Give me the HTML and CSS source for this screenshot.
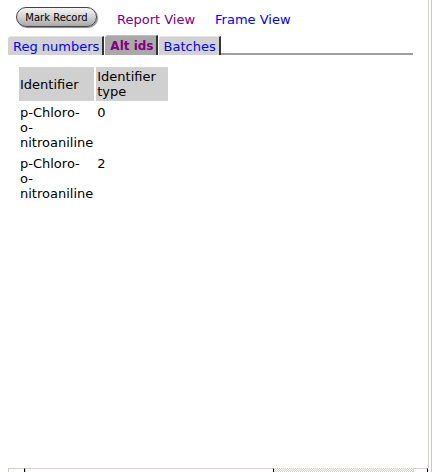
FILE: index.html
```html
<!DOCTYPE html>
<html>
<head>
<meta charset="utf-8">
<link rel="stylesheet" href="styles.css">
</head>
<body>
<div class="frame">
  <div class="content">
    <div class="topbar">
      <button class="mark">Mark Record</button>
      <a class="link visited" href="#">Report View</a>
      <a class="link" href="#">Frame View</a>
    </div>
    <div class="tabs">
      <a class="tab" href="#">Reg numbers</a>
      <a class="tab active" href="#">Alt ids</a>
      <a class="tab" href="#">Batches</a>
      <span class="tabline"></span>
    </div>
    <table class="ids">
      <tr><th class="c1">Identifier</th><th class="c2">Identifier type</th></tr>
      <tr><td><span class="seg">p-Chloro-</span><span class="seg">o-</span><span class="seg">nitroaniline</span></td><td>0</td></tr>
      <tr><td><span class="seg">p-Chloro-</span><span class="seg">o-</span><span class="seg">nitroaniline</span></td><td>2</td></tr>
    </table>
  </div>
  <div class="hscroll">
    <span class="sb-btn"></span>
    <span class="sb-thumb"></span>
    <span class="sb-track"></span>
    <span class="sb-btn right"></span>
  </div>
</div>
</body>
</html>
```

FILE: styles.css
```css
html, body {
  margin: 0;
  padding: 0;
  background: #fff;
}
body {
  font-family: "DejaVu Sans", Verdana, sans-serif;
  font-size: 13px;
  color: #000;
}
.frame {
  height: 472px;
  width: 432px;
  box-sizing: border-box;
  display: flex;
  flex-direction: column;
  border-right: 1px solid #c8c8c8;
  padding-right: 1px;
}
.content {
  flex: 1;
  border-right: 1px solid #d4d0c8;
  margin-right: 1px;
}
.topbar {
  display: flex;
  align-items: center;
  gap: 20px;
  padding: 7px 0 0 16px;
  height: 20px;
}
.mark {
  height: 20px;
  width: 81px;
  padding: 0;
  font-family: "DejaVu Sans", Verdana, sans-serif;
  font-size: 10px;
  color: #000;
  border: 1px solid #444;
  border-radius: 10px;
  background: linear-gradient(#f4f4f4 0%, #d6d6d6 45%, #a8a8a8 100%);
  box-shadow: 1px 1px 1px #888;
}
.link {
  color: #0000ff;
  text-decoration: none;
  font-size: 13px;
  position: relative;
  top: 2px;
}
.link.visited {
  color: #800080;
}
.tabs {
  display: flex;
  align-items: flex-end;
  margin: 7px 0 0 8px;
  height: 21px;
}
.tab {
  display: block;
  box-sizing: border-box;
  height: 19px;
  line-height: 19px;
  padding: 0 3px 0 5px;
  background: #d2d2d2;
  border-top: 1px solid #e4e4e4;
  border-right: 2px solid #333;
  border-top-left-radius: 3px;
  color: #0000ff;
  text-decoration: none;
  font-size: 13px;
  margin-right: 1px;
}
.tab.active {
  height: 20px;
  background: #a9a9a9;
  color: #800080;
  font-weight: bold;
  font-size: 12px;
  border-top-color: #c0c0c0;
  padding: 0 2px 0 5px;
  line-height: 20px;
}
.tabline {
  width: 192px;
  height: 1px;
  border-bottom: 2px solid #a0a0a0;
  margin-left: -1px;
}
.ids {
  margin: 10px 0 0 17px;
  border-collapse: separate;
  border-spacing: 2px;
  font-size: 13px;
}
.ids th {
  background: #d0d0d0;
  font-weight: normal;
  text-align: left;
  vertical-align: middle;
  padding: 2px 1px;
  line-height: 15px;
}
.ids th.c1 { width: 72px; }
.ids th.c2 { width: 70px; }
.ids td {
  vertical-align: top;
  padding: 2px 1px;
  line-height: 15px;
}
.seg {
  display: block;
}
.hscroll {
  display: flex;
  height: 4px;
  margin: 0 2px 0 8px;
}
.hscroll span {
  box-sizing: border-box;
  height: 4px;
  border-top: 1px solid #d4d0c8;
  border-left: 1px solid #d4d0c8;
  background: #fff;
}
.sb-btn {
  width: 17px;
  border-right: 1px solid #000;
}
.sb-btn.right {
  width: 15px;
}
.sb-thumb {
  width: 249px;
  border-right: 1px solid #000;
}
.sb-track {
  flex: 1;
  border: none !important;
  background: repeating-conic-gradient(#d4d0c8 0% 25%, #fff 0% 50%) 0 0 / 2px 2px !important;
}
```
